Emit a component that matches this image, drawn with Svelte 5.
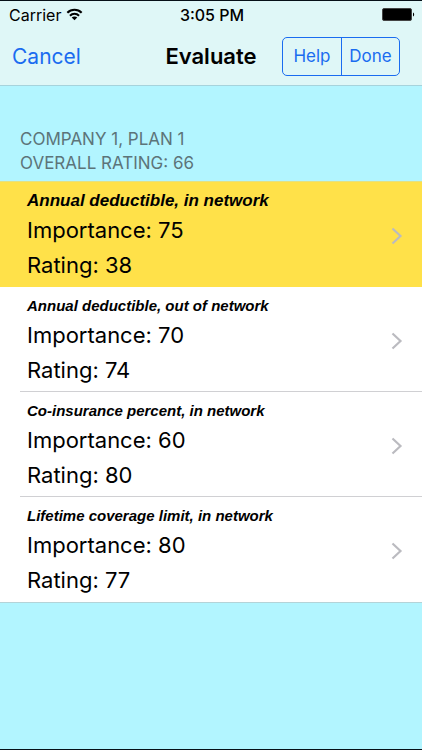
<script lang="ts">
  interface Criterion {
    name: string;
    importance: number;
    rating: number;
  }

  const plan = { company: 'Company 1', name: 'Plan 1', overall: 66 };

  const criteria: Criterion[] = [
    { name: 'Annual deductible, in network', importance: 75, rating: 38 },
    { name: 'Annual deductible, out of network', importance: 70, rating: 74 },
    { name: 'Co-insurance percent, in network', importance: 60, rating: 80 },
    { name: 'Lifetime coverage limit, in network', importance: 80, rating: 77 },
  ];

  let selected = $state(0);
</script>

<div class="screen">
  <header>
    <div class="status">
      <span class="carrier">
        Carrier
        <svg width="17" height="13" viewBox="0 0 18 14" aria-hidden="true">
          <g fill="none" stroke="#000" stroke-width="2.2">
            <path d="M1.3 5.2a10.8 10.8 0 0 1 15.4 0" />
            <path d="M4.1 8.3a6.9 6.9 0 0 1 9.8 0" />
          </g>
          <path d="M9 13.2 6 10.3a4.2 4.2 0 0 1 6 0z" />
        </svg>
      </span>
      <time>3:05 PM</time>
      <svg class="battery" width="33" height="14" viewBox="0 0 33 14" aria-hidden="true">
        <rect x="0.5" y="0.5" width="29" height="12" rx="1.5" stroke="#444" />
        <path d="M31 4.5c1.6.6 1.6 3.4 0 4z" />
      </svg>
    </div>
    <nav>
      <button class="cancel">Cancel</button>
      <h1>Evaluate</h1>
      <div class="segmented">
        <button>Help</button>
        <button>Done</button>
      </div>
    </nav>
  </header>

  <main>
    <h2>
      {plan.company}, {plan.name}<br />
      Overall rating: {plan.overall}
    </h2>
    <ul>
      {#each criteria as item, i}
        <li class:selected={i === selected}>
          <button class="row" onclick={() => (selected = i)}>
            <span class="text">
              <span class="name">{item.name}</span>
              <span class="value">Importance: {item.importance}</span>
              <span class="value">Rating: {item.rating}</span>
            </span>
            <svg width="12" height="18" viewBox="0 0 12 18" aria-hidden="true">
              <path d="M1.5 1.5 9.5 9l-8 7.5" fill="none" stroke="#bbbbc0" stroke-width="2.2" />
            </svg>
          </button>
        </li>
      {/each}
    </ul>
  </main>
</div>

<style>
  :global(body) {
    margin: 0;
    background: #b2f5ff;
  }
  .screen {
    display: flex;
    flex-direction: column;
    box-sizing: border-box;
    min-height: 100vh;
    border-top: 1px solid #061018;
    border-bottom: 1px solid #061018;
    background: #b2f5ff;
    color: #000;
    font-family: Inter, 'Liberation Sans', sans-serif;
  }
  button {
    margin: 0;
    padding: 0;
    border: 0;
    background: none;
    color: inherit;
    font: inherit;
    cursor: pointer;
  }
  header {
    background: #dff7f7;
    border-bottom: 1px solid #a6d3dc;
  }
  .status,
  nav {
    display: grid;
    grid-template-columns: 1fr auto 1fr;
    align-items: center;
  }
  .status {
    height: 27px;
    padding: 0 7px 0 9px;
    font-size: 16px;
  }
  .carrier {
    display: flex;
    align-items: center;
    gap: 5px;
  }
  .status time {
    font-weight: 500;
  }
  .battery {
    justify-self: end;
  }
  nav {
    height: 56px;
    padding: 0 12px 1px;
  }
  .cancel {
    justify-self: start;
    color: #1a6cf0;
    font-size: 21px;
  }
  h1 {
    margin: 0;
    font-size: 22px;
    font-weight: 600;
  }
  .segmented {
    display: flex;
    justify-self: end;
    margin-right: 10px;
    border: 1px solid #1a6cf0;
    border-radius: 5px;
    color: #1a6cf0;
    font-size: 17px;
    line-height: 37px;
  }
  .segmented button {
    width: 58px;
  }
  .segmented button + button {
    border-left: 1px solid #1a6cf0;
  }
  h2 {
    margin: 0;
    padding: 41px 20px 6px;
    color: #5c7479;
    font-size: 17px;
    font-weight: 400;
    line-height: 24px;
    text-transform: uppercase;
  }
  ul {
    margin: 0;
    padding: 0;
    list-style: none;
    background: #fff;
    border-top: 1px solid #e2e184;
    border-bottom: 1px solid #b4d3d8;
  }
  .row {
    display: flex;
    align-items: center;
    justify-content: space-between;
    width: 100%;
    padding: 6px 19px 3px 27px;
    text-align: left;
  }
  .text {
    display: flex;
    flex-direction: column;
  }
  .name {
    font-family: 'Liberation Sans', sans-serif;
    font-size: 15px;
    font-style: italic;
    font-weight: 700;
    line-height: 25px;
  }
  .value {
    font-size: 22px;
    line-height: 35px;
  }
  li::after {
    content: '';
    display: block;
    height: 1px;
    margin-left: 20px;
    background: #d0d0d3;
  }
  li:last-child::after,
  .selected::after {
    background: none;
  }
  .selected {
    background: #ffe149;
  }
  .selected .name {
    font-size: 17px;
  }
</style>
